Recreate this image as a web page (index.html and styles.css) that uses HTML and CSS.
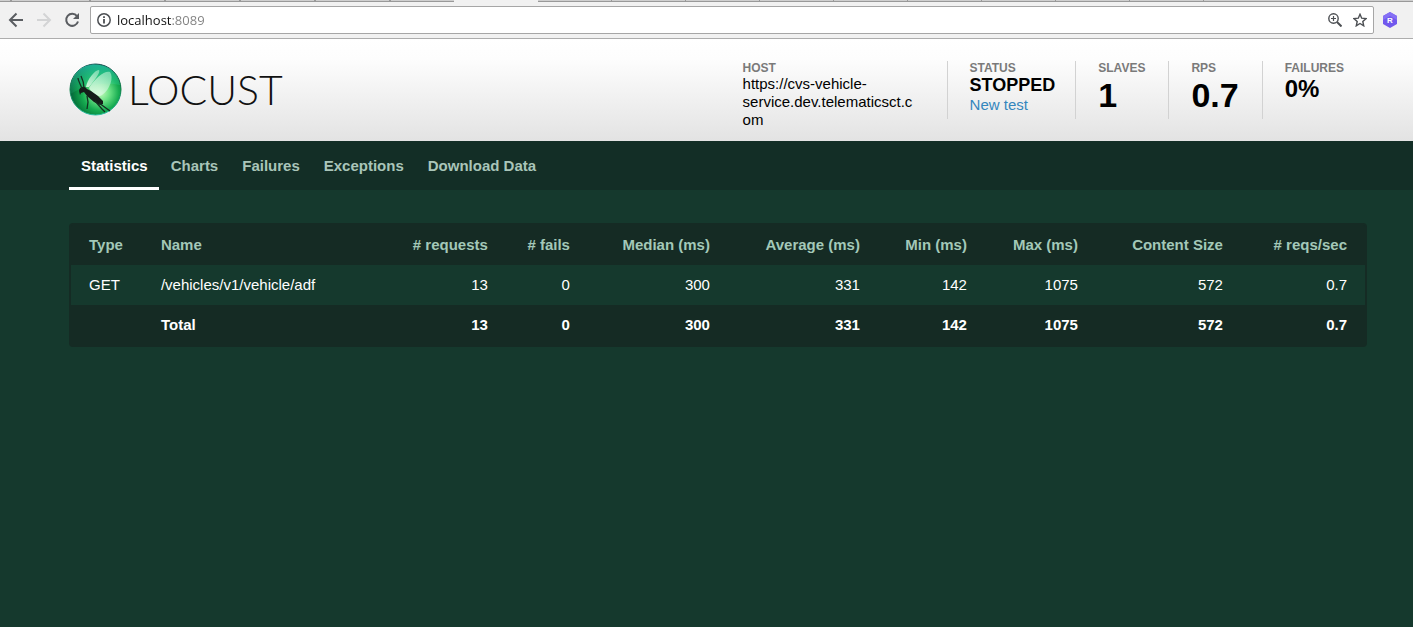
FILE: index.html
```html
<!DOCTYPE html>
<html lang="en">
<head>
<meta charset="utf-8">
<meta name="viewport" content="width=device-width, initial-scale=1">
<title>Locust</title>
<link rel="stylesheet" href="styles.css">
</head>
<body>
<div class="browser">
  <div class="tabstrip">
    <div class="tabs-before"></div>
    <div class="tab-active"></div>
    <div class="tabs-after"></div>
  </div>
  <div class="toolbar">
    <button class="tool" aria-label="Back"><svg width="16" height="16" viewBox="0 0 16 16" fill="none" stroke="#5a5d61" stroke-width="2"><path d="M15 8H2.500M8.500 1.500 2 8l6.500 6.500"/></svg></button>
    <button class="tool" aria-label="Forward" disabled><svg width="16" height="16" viewBox="0 0 16 16" fill="none" stroke="#d3d4d5" stroke-width="2"><path d="M1 8h12.500M7.500 1.500 14 8l-6.500 6.500"/></svg></button>
    <button class="tool" aria-label="Reload"><svg width="16" height="16" viewBox="0 0 16 16"><path d="M13 4.200A6 6 0 1 0 14 9.500" fill="none" stroke="#5a5d61" stroke-width="2"/><path d="M15 1v6H9z" fill="#5a5d61"/></svg></button>
    <div class="omnibox">
      <button class="omni-icon" aria-label="Site information"><svg width="14" height="14" viewBox="0 0 14 14"><circle cx="7" cy="7" r="6.200" fill="none" stroke="#4c4f53" stroke-width="1.500"/><path d="M6.100 6h1.800v4.500H6.100zM6.100 3.300h1.800V5H6.100z" fill="#4c4f53"/></svg></button>
      <input class="address" type="text" aria-label="Address" value="localhost:8089">
      <button class="omni-icon" aria-label="Zoom"><svg width="14" height="14" viewBox="0 0 14 14" fill="none" stroke="#4c4f53"><circle cx="5.500" cy="5.500" r="4.700" stroke-width="1.400"/><path d="M9 9l4.500 4.500" stroke-width="2"/><path d="M3 5.500h5M5.500 3v5" stroke-width="1.200"/></svg></button>
      <button class="omni-icon" aria-label="Bookmark"><svg width="14" height="14" viewBox="0 0 14 14"><path d="M7 1.300 8.700 5.200 13 5.600 9.800 8.500 10.700 12.800 7 10.500 3.300 12.800 4.200 8.500 1 5.600 5.300 5.200z" fill="none" stroke="#4c4f53" stroke-width="1.400"/></svg></button>
    </div>
    <button class="extension" aria-label="Extension"><svg width="16" height="16" viewBox="0 0 16 16"><path d="M8 0 15 4v8l-7 4-7-4V4z" fill="#7158ed"/><path d="M8 0 15 4v4L8 4 1 8V4z" fill="#8570f5"/><text x="8" y="11" text-anchor="middle" class="extension-letter">R</text></svg></button>
  </div>
</div>

<header class="header">
  <a class="logo" href="#" aria-label="Locust">
    <svg class="logo-mark" width="54" height="54" viewBox="0 0 54 54">
      <defs>
        <radialGradient id="orb" cx="60%" cy="56%" r="58%">
          <stop offset="0" stop-color="#c5fabb"/><stop offset=".3" stop-color="#6be285"/><stop offset=".62" stop-color="#16ab50"/><stop offset=".87" stop-color="#08803e"/><stop offset="1" stop-color="#07663d"/>
        </radialGradient>
        <linearGradient id="shine" x1="0" y1="0" x2="0" y2="1"><stop offset="0" stop-color="#2bd4c5" stop-opacity=".65"/><stop offset="1" stop-color="#36d990" stop-opacity=".1"/></linearGradient>
        <linearGradient id="rim" x1="0" y1="0" x2="0" y2="1"><stop offset="0" stop-color="#174f53"/><stop offset=".5" stop-color="#087c45"/><stop offset="1" stop-color="#27bfa0"/></linearGradient>
        <linearGradient id="wing" x1="1" y1="0" x2="0" y2="1"><stop offset="0" stop-color="#a9ecc8" stop-opacity=".6"/><stop offset="1" stop-color="#effff0" stop-opacity=".85"/></linearGradient>
      </defs>
      <circle cx="26.500" cy="26.500" r="25.500" fill="url(#orb)" stroke="url(#rim)" stroke-width="1"/>
      <path d="M1.500 27C2 10 13 1.500 26 1.500S49 10 51 22C35 19 18 21 1.500 31z" fill="url(#shine)"/>
      <path d="M17 24C18 16 27 6 30 7c2 2-5 11-10 17z" fill="url(#wing)"/>
      <path d="M20 25C26 15 36 7 41 9c4 5 0 18-8 23-4 3-10-2-13-7z" fill="url(#wing)"/>
      <path d="M10 28c0-3 3-5 6-4l2 2 4 2 7 5 5 5v3l-3 1-6-3-7-6-3-4-3 1-1 2z" fill="#151c19"/>
      <path d="M13 26C12 22 9 18 9 15M15 25c0-4-1-8-3-12M18 33l1 6-1 7M26 38l7 8 3 3M30 40l11 8" fill="none" stroke="#142e20" stroke-width="1.300"/>
    </svg>
    <span class="wordmark">LOCUST</span>
  </a>
  <div class="boxes">
    <div class="box box-host"><div class="label">HOST</div><div class="host">https://cvs-vehicle-service.dev.telematicsct.com</div></div>
    <div class="box box-status"><div class="label">STATUS</div><div class="status">STOPPED</div><a class="new-test" href="#">New test</a></div>
    <div class="box"><div class="label">SLAVES</div><div class="value">1</div></div>
    <div class="box"><div class="label">RPS</div><div class="value">0.7</div></div>
    <div class="box"><div class="label">FAILURES</div><div class="value value-small">0%</div></div>
  </div>
</header>

<nav class="nav">
  <a class="nav-item nav-item-active" href="#">Statistics</a>
  <a class="nav-item" href="#">Charts</a>
  <a class="nav-item" href="#">Failures</a>
  <a class="nav-item" href="#">Exceptions</a>
  <a class="nav-item" href="#">Download Data</a>
</nav>

<main class="main">
  <table class="stats">
    <colgroup><col class="c-type"><col class="c-name"><col class="c-requests"><col class="c-fails"><col class="c-median"><col class="c-average"><col class="c-min"><col class="c-max"><col class="c-size"><col class="c-rate"></colgroup>
    <thead><tr><th>Type</th><th>Name</th><th># requests</th><th># fails</th><th>Median (ms)</th><th>Average (ms)</th><th>Min (ms)</th><th>Max (ms)</th><th>Content Size</th><th># reqs/sec</th></tr></thead>
    <tbody>
      <tr><td>GET</td><td>/vehicles/v1/vehicle/adf</td><td>13</td><td>0</td><td>300</td><td>331</td><td>142</td><td>1075</td><td>572</td><td>0.7</td></tr>
      <tr class="total"><td></td><td>Total</td><td>13</td><td>0</td><td>300</td><td>331</td><td>142</td><td>1075</td><td>572</td><td>0.7</td></tr>
    </tbody>
  </table>
</main>
</body>
</html>
```

FILE: styles.css
```css
* { box-sizing: border-box; }

body {
  margin: 0;
  min-height: 100vh;
  background: #15392d;
  color: #fff;
  font: 15px/18px "Liberation Sans", Arial, sans-serif;
}

a { text-decoration: none; }

button {
  display: flex;
  padding: 0;
  border: 0;
  background: none;
}

/* Browser bar */
.browser {
  background: #f1f1f1;
  border-bottom: 1px solid #adadad;
}

.tabstrip { display: flex; height: 2px; }

.tabs-before {
  width: 454px;
  border-bottom: 1px solid #999;
  background: repeating-linear-gradient(90deg, #cfcfcf 0 73px, #999 73px 75px) 16px 0;
}

.tab-active { width: 84px; }

.tabs-after {
  flex: 1;
  border-bottom: 1px solid #999;
  background:
    linear-gradient(90deg, transparent 670px, #cfcfcf 670px),
    repeating-linear-gradient(90deg, #cfcfcf 0 73px, #999 73px 74px);
}

.toolbar {
  display: flex;
  align-items: center;
  gap: 12px;
  padding: 4px 15px 4px 8px;
}

.omnibox {
  flex: 1;
  display: flex;
  align-items: center;
  gap: 11px;
  height: 28px;
  margin-left: -2px;
  margin-right: -4px;
  padding: 0 6px;
  border: 1px solid #a6a6a6;
  border-radius: 2px;
  background: #fff;
}

.address {
  flex: 1;
  min-width: 0;
  margin-left: -5px;
  padding: 0;
  border: 0;
  outline: 0;
  font: 13px/20px "Open Sans", "Noto Sans", sans-serif;
  background: linear-gradient(90deg, #111 55px, #808080 55px);
  background-clip: text;
  -webkit-background-clip: text;
  -webkit-text-fill-color: transparent;
}

.extension-letter { font: bold 8px "Liberation Sans", Arial, sans-serif; fill: #fff; }

/* Header */
.header {
  display: flex;
  justify-content: space-between;
  align-items: flex-start;
  min-height: 102px;
  padding: 22px 46px 10px 69px;
  background: linear-gradient(#fff, #fdfdfd 20%, #e3e3e3);
  color: #000;
}

.logo {
  display: flex;
  align-items: center;
  gap: 5px;
  padding-top: 2px;
  color: #111;
}

.wordmark { font: 300 41px/48px Lato, sans-serif; }

.boxes { display: flex; align-items: flex-start; }

.box {
  min-height: 58px;
  padding: 0 23px 0 22px;
  border-left: 1px solid #d2d2d2;
}

.box-host { width: 226px; padding-right: 28px; border-left: 0; }

.box-status { padding-right: 20px; }

.label {
  color: #7a7a7a;
  font-size: 12px;
  font-weight: bold;
  line-height: 14px;
}

.host { overflow-wrap: anywhere; }

.status { font-size: 18px; font-weight: bold; line-height: 20px; }

.new-test { color: #3486bd; line-height: 20px; }

.value { font-size: 34px; font-weight: bold; line-height: 40px; }

.value-small { font-size: 24px; line-height: 28px; }

/* Navigation */
.nav {
  display: flex;
  padding-left: 69px;
  background: #132e26;
}

.nav-item {
  padding: 16px 12px 12px;
  border-bottom: 3px solid transparent;
  color: #a9c5b9;
  font-weight: bold;
}

.nav-item-active { padding-right: 11px; border-color: #fff; color: #fff; }

/* Statistics */
.main { padding: 33px 46px 33px 69px; }

.stats {
  width: 100%;
  table-layout: fixed;
  border: 2px solid #152b24;
  border-radius: 4px;
  border-spacing: 0;
  background: #152b24;
}

.stats th, .stats td {
  height: 40px;
  padding: 0 18px;
  text-align: right;
  white-space: nowrap;
}

.stats th { color: #a3c8b8; }

.stats td { background: #15392d; }

.stats .total td { background: #152b24; font-weight: bold; }

.stats th:nth-child(-n+2), .stats td:nth-child(-n+2) { text-align: left; }

.c-type { width: 5.56%; }
.c-name { width: 19.24%; }
.c-requests { width: 8.81%; }
.c-fails { width: 6.34%; }
.c-median { width: 10.82%; }
.c-average { width: 11.59%; }
.c-min { width: 8.27%; }
.c-max { width: 8.58%; }
.c-size { width: 11.21%; }
.c-rate { width: 9.58%; }
```
